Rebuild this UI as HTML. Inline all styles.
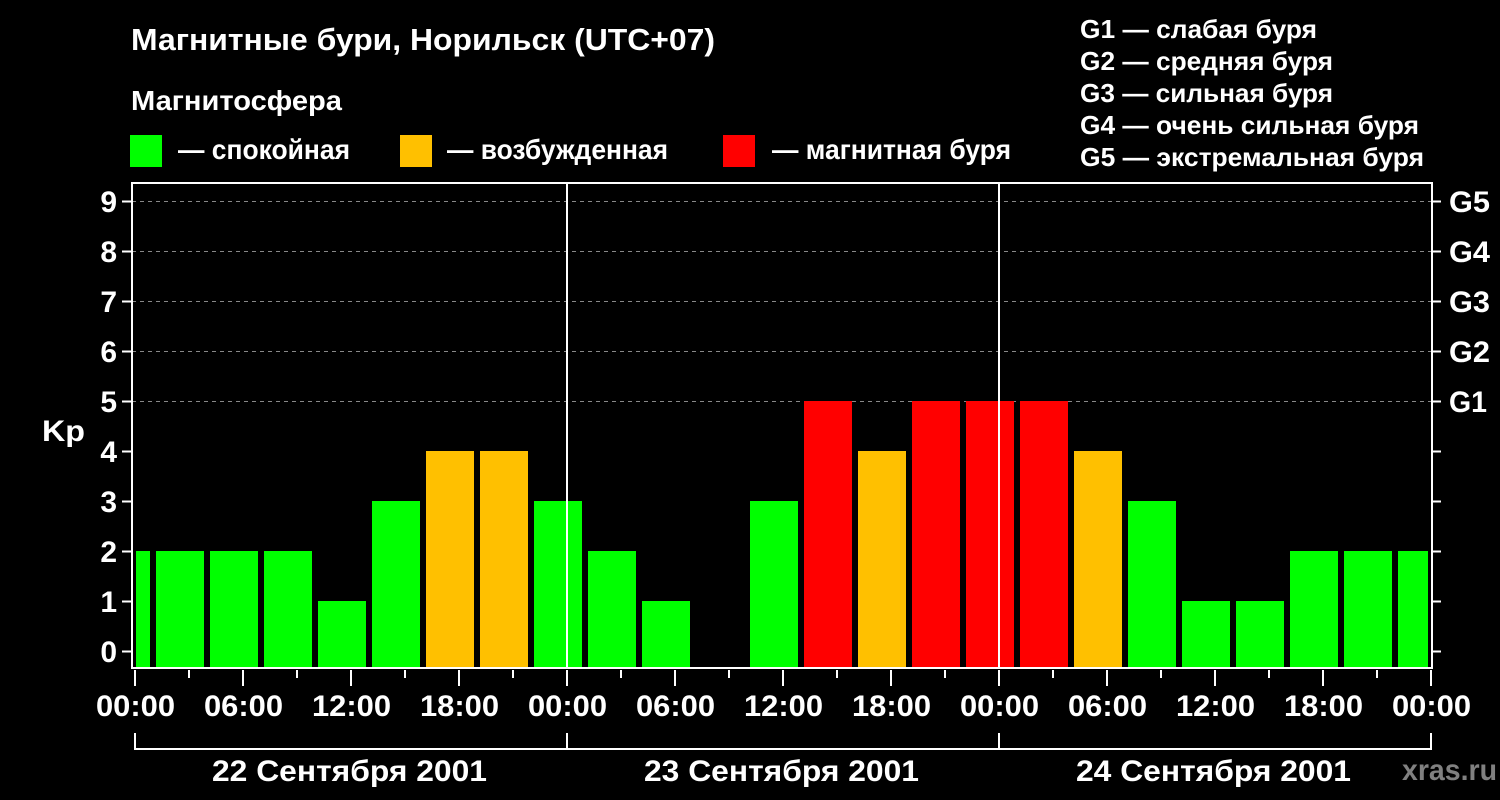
<!DOCTYPE html>
<html><head><meta charset="utf-8"><style>
html,body{margin:0;padding:0;background:#000;width:1500px;height:800px;overflow:hidden}
svg{display:block}
text{font-family:"Liberation Sans",Arial,sans-serif;font-weight:bold;fill:#fff}
</style></head><body>
<svg width="1500" height="800" viewBox="0 0 1500 800" xmlns="http://www.w3.org/2000/svg">
<rect width="1500" height="800" fill="#000"/>
<text x="131" y="50" font-size="31" textLength="584" lengthAdjust="spacingAndGlyphs">Магнитные бури, Норильск (UTC+07)</text>
<text x="131" y="110" font-size="28" textLength="211" lengthAdjust="spacingAndGlyphs">Магнитосфера</text>
<rect x="130" y="135" width="32" height="32" fill="#00ff00"/>
<rect x="400" y="135" width="32" height="32" fill="#ffc000"/>
<rect x="723" y="135" width="32" height="32" fill="#ff0000"/>
<text x="178" y="159" font-size="28" textLength="172" lengthAdjust="spacingAndGlyphs">— спокойная</text>
<text x="447" y="159" font-size="28" textLength="221" lengthAdjust="spacingAndGlyphs">— возбужденная</text>
<text x="772" y="159" font-size="28" textLength="239" lengthAdjust="spacingAndGlyphs">— магнитная буря</text>
<g font-size="26">
<text x="1080" y="38" textLength="237" lengthAdjust="spacingAndGlyphs">G1 — слабая буря</text>
<text x="1080" y="70" textLength="253" lengthAdjust="spacingAndGlyphs">G2 — средняя буря</text>
<text x="1080" y="102" textLength="253" lengthAdjust="spacingAndGlyphs">G3 — сильная буря</text>
<text x="1080" y="134" textLength="339" lengthAdjust="spacingAndGlyphs">G4 — очень сильная буря</text>
<text x="1080" y="166" textLength="344" lengthAdjust="spacingAndGlyphs">G5 — экстремальная буря</text>
</g>
<g stroke="#888" stroke-width="1" stroke-dasharray="4,4">
<line x1="132" y1="201.5" x2="1432" y2="201.5"/>
<line x1="132" y1="251.5" x2="1432" y2="251.5"/>
<line x1="132" y1="301.5" x2="1432" y2="301.5"/>
<line x1="132" y1="351.5" x2="1432" y2="351.5"/>
<line x1="132" y1="401.5" x2="1432" y2="401.5"/>
</g>
<g>
<rect x="136" y="551" width="14" height="117" fill="#00ff00"/>
<rect x="156" y="551" width="48" height="117" fill="#00ff00"/>
<rect x="210" y="551" width="48" height="117" fill="#00ff00"/>
<rect x="264" y="551" width="48" height="117" fill="#00ff00"/>
<rect x="318" y="601" width="48" height="67" fill="#00ff00"/>
<rect x="372" y="501" width="48" height="167" fill="#00ff00"/>
<rect x="426" y="451" width="48" height="217" fill="#ffc000"/>
<rect x="480" y="451" width="48" height="217" fill="#ffc000"/>
<rect x="534" y="501" width="48" height="167" fill="#00ff00"/>
<rect x="588" y="551" width="48" height="117" fill="#00ff00"/>
<rect x="642" y="601" width="48" height="67" fill="#00ff00"/>
<rect x="750" y="501" width="48" height="167" fill="#00ff00"/>
<rect x="804" y="401" width="48" height="267" fill="#ff0000"/>
<rect x="858" y="451" width="48" height="217" fill="#ffc000"/>
<rect x="912" y="401" width="48" height="267" fill="#ff0000"/>
<rect x="966" y="401" width="48" height="267" fill="#ff0000"/>
<rect x="1020" y="401" width="48" height="267" fill="#ff0000"/>
<rect x="1074" y="451" width="48" height="217" fill="#ffc000"/>
<rect x="1128" y="501" width="48" height="167" fill="#00ff00"/>
<rect x="1182" y="601" width="48" height="67" fill="#00ff00"/>
<rect x="1236" y="601" width="48" height="67" fill="#00ff00"/>
<rect x="1290" y="551" width="48" height="117" fill="#00ff00"/>
<rect x="1344" y="551" width="48" height="117" fill="#00ff00"/>
<rect x="1398" y="551" width="30" height="117" fill="#00ff00"/>
</g>
<g stroke="#fff" stroke-width="2" fill="none">
<rect x="132" y="183" width="1300" height="485"/>
<line x1="567" y1="183" x2="567" y2="668"/>
<line x1="999" y1="183" x2="999" y2="668"/>
<path d="M122 201.5h10M122 251.5h10M122 301.5h10M122 351.5h10M122 401.5h10M122 451.5h10M122 501.5h10M122 551.5h10M122 601.5h10M122 651.5h10"/>
<path d="M1432 201.5h9M1432 251.5h9M1432 301.5h9M1432 351.5h9M1432 401.5h9M1432 451.5h9M1432 501.5h9M1432 551.5h9M1432 601.5h9M1432 651.5h9"/>
<path d="M135 670v16M243 670v16M351 670v16M459 670v16M567 670v16M675 670v16M783 670v16M891 670v16M999 670v16M1107 670v16M1215 670v16M1323 670v16M1431 670v16"/>
<path d="M189 670v8M297 670v8M405 670v8M513 670v8M621 670v8M729 670v8M837 670v8M945 670v8M1053 670v8M1161 670v8M1269 670v8M1377 670v8"/>
<path d="M135 733v16H1431v-16M567 733v16M999 733v16"/>
</g>
<g font-size="30" text-anchor="end">
<text x="117" y="212">9</text><text x="117" y="262">8</text><text x="117" y="312">7</text>
<text x="117" y="362">6</text><text x="117" y="412">5</text><text x="117" y="462">4</text>
<text x="117" y="512">3</text><text x="117" y="562">2</text><text x="117" y="612">1</text>
<text x="117" y="662">0</text>
</g>
<text x="42" y="441" font-size="30" textLength="43" lengthAdjust="spacingAndGlyphs">Kp</text>
<g font-size="30">
<text x="1449" y="212" textLength="41" lengthAdjust="spacingAndGlyphs">G5</text>
<text x="1449" y="262" textLength="41" lengthAdjust="spacingAndGlyphs">G4</text>
<text x="1449" y="312" textLength="41" lengthAdjust="spacingAndGlyphs">G3</text>
<text x="1449" y="362" textLength="41" lengthAdjust="spacingAndGlyphs">G2</text>
<text x="1449" y="412" textLength="38" lengthAdjust="spacingAndGlyphs">G1</text>
</g>
<g font-size="30">
<text x="96" y="716" textLength="79" lengthAdjust="spacingAndGlyphs">00:00</text>
<text x="204" y="716" textLength="79" lengthAdjust="spacingAndGlyphs">06:00</text>
<text x="312" y="716" textLength="79" lengthAdjust="spacingAndGlyphs">12:00</text>
<text x="420" y="716" textLength="79" lengthAdjust="spacingAndGlyphs">18:00</text>
<text x="528" y="716" textLength="79" lengthAdjust="spacingAndGlyphs">00:00</text>
<text x="636" y="716" textLength="79" lengthAdjust="spacingAndGlyphs">06:00</text>
<text x="744" y="716" textLength="79" lengthAdjust="spacingAndGlyphs">12:00</text>
<text x="852" y="716" textLength="79" lengthAdjust="spacingAndGlyphs">18:00</text>
<text x="960" y="716" textLength="79" lengthAdjust="spacingAndGlyphs">00:00</text>
<text x="1068" y="716" textLength="79" lengthAdjust="spacingAndGlyphs">06:00</text>
<text x="1176" y="716" textLength="79" lengthAdjust="spacingAndGlyphs">12:00</text>
<text x="1284" y="716" textLength="79" lengthAdjust="spacingAndGlyphs">18:00</text>
<text x="1392" y="716" textLength="79" lengthAdjust="spacingAndGlyphs">00:00</text>
<text x="212" y="781" textLength="275" lengthAdjust="spacingAndGlyphs">22 Сентября 2001</text>
<text x="644" y="781" textLength="275" lengthAdjust="spacingAndGlyphs">23 Сентября 2001</text>
<text x="1076" y="781" textLength="275" lengthAdjust="spacingAndGlyphs">24 Сентября 2001</text>
</g>
<text x="1402" y="780" font-size="30" style="fill:#808080" textLength="95" lengthAdjust="spacingAndGlyphs">xras.ru</text>
</svg>
</body></html>
